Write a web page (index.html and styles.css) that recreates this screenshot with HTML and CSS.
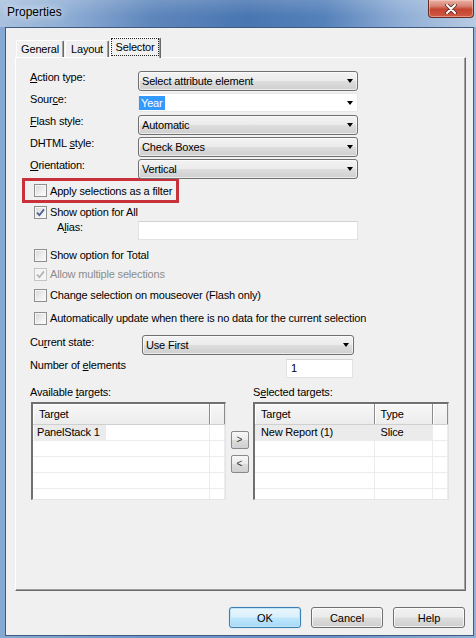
FILE: index.html
```html
<!DOCTYPE html>
<html lang="en">
<head>
  <meta charset="UTF-8" />
  <meta name="viewport" content="width=device-width, initial-scale=1.0"/>
  <title>Properties</title>
  <link rel="stylesheet" href="styles.css">
</head>
<body>
  <div class="window">
    <div class="titlebar">
      <span class="title">Properties</span>
      <button class="close-btn" title="Close">
        <svg width="12" height="10" viewBox="0 0 12 10">
          <path d="M2 1 L10 9 M10 1 L2 9" stroke="#5a2a24" stroke-width="3.6" stroke-linecap="round"/>
          <path d="M2 1 L10 9 M10 1 L2 9" stroke="#fff" stroke-width="2" stroke-linecap="round"/>
        </svg>
      </button>
    </div>

    <div class="client">
      <div class="tabs">
        <div class="tab tab-general">General</div>
        <div class="tab tab-layout">Layout</div>
        <div class="tab tab-selector active"><span class="focus">Selector</span></div>
      </div>

      <div class="page">
        <div class="fields">
          <label><u>A</u>ction type:</label>
          <div class="combo">Select attribute element</div>

          <label>Sour<u>c</u>e:</label>
          <div class="combo edit"><span class="selected-text">Year</span></div>

          <label><u>F</u>lash style:</label>
          <div class="combo">Automatic</div>

          <label>DHTML <u>s</u>tyle:</label>
          <div class="combo">Check Boxes</div>

          <label><u>O</u>rientation:</label>
          <div class="combo">Vertical</div>
        </div>

        <div class="marked">
          <div class="check-row"><span class="box"></span>Apply selections as a filter</div>
        </div>

        <div class="check-row">
          <span class="box checked">
            <svg width="9" height="9" viewBox="0 0 9 9"><path d="M1 4.6 L3.4 7.2 L8 1.4" fill="none" stroke="#4b5f96" stroke-width="1.8"/></svg>
          </span>Show option for All
        </div>
        <div class="alias-row">
          <label>A<u>l</u>ias:</label>
          <div class="textbox"></div>
        </div>

        <div class="check-row row-total"><span class="box"></span>Show option for Total</div>
        <div class="check-row row-multi disabled">
          <span class="box checked">
            <svg width="9" height="9" viewBox="0 0 9 9"><path d="M1 4.6 L3.4 7.2 L8 1.4" fill="none" stroke="#b4b4b4" stroke-width="1.8"/></svg>
          </span>Allow multiple selections
        </div>
        <div class="check-row row-hover"><span class="box"></span>Change selection on mouseover (Flash only)</div>
        <div class="check-row row-auto"><span class="box"></span>Automatically update when there is no data for the current selection</div>

        <div class="state-row">
          <label>Cu<u>r</u>rent state:</label>
          <div class="combo">Use First</div>
        </div>
        <div class="count-row">
          <label>Number of <u>e</u>lements</label>
          <div class="textbox">1</div>
        </div>

        <div class="targets">
          <label>Available <u>t</u>argets:</label>
          <span></span>
          <label>S<u>e</u>lected targets:</label>

          <div class="list list-available">
            <table>
              <colgroup><col style="width:176px"><col></colgroup>
              <tr><th>Target</th><th></th></tr>
              <tr><td><span class="item">PanelStack 1</span></td><td></td></tr>
              <tr><td></td><td></td></tr>
              <tr><td></td><td></td></tr>
              <tr><td></td><td></td></tr>
              <tr><td></td><td></td></tr>
            </table>
          </div>

          <div class="move-buttons">
            <button class="move">&gt;</button>
            <button class="move">&lt;</button>
          </div>

          <div class="list list-selected">
            <table>
              <colgroup><col style="width:119px"><col style="width:58px"><col></colgroup>
              <tr><th>Target</th><th>Type</th><th></th></tr>
              <tr class="current"><td>New Report (1)</td><td>Slice</td><td class="blank"></td></tr>
              <tr><td></td><td></td><td></td></tr>
              <tr><td></td><td></td><td></td></tr>
              <tr><td></td><td></td><td></td></tr>
              <tr><td></td><td></td><td></td></tr>
            </table>
          </div>
        </div>
      </div>

      <div class="actions">
        <button class="btn default">OK</button>
        <button class="btn">Cancel</button>
        <button class="btn">Help</button>
      </div>
    </div>
  </div>
</body>
</html>
```

FILE: styles.css
```css
* {
  box-sizing: border-box;
}
body {
  margin: 0;
  font-family: "Liberation Sans", Arial, sans-serif;
  font-size: 11px;
  letter-spacing: -0.18px;
  color: #000;
}
u {
  text-decoration-thickness: 1px;
  text-underline-offset: 1px;
}

/* window frame */
.window {
  width: 476px;
  height: 638px;
  display: flex;
  flex-direction: column;
  overflow: hidden;
  background: linear-gradient(90deg, #86a9d4 0%, #6d95c8 30%, #6890c4 70%, #92b1d8 100%);
}
.titlebar {
  height: 27px;
  flex: none;
  display: flex;
  align-items: flex-start;
  background:
    linear-gradient(rgba(255,255,255,0.15), rgba(255,255,255,0) 60%),
    linear-gradient(90deg, #a9c1de 0%, #8eadd4 14%, #5e86bc 32%, #4976b1 52%, #5581ba 68%, #8eadd5 84%, #b7cbe3 100%);
}
.title {
  font-size: 12px;
  line-height: 14px;
  letter-spacing: 0;
  padding: 5px 0 0 7px;
  text-shadow: 0 0 6px #e4eef8, 0 0 10px #dbe7f4;
}
.close-btn {
  margin: 0 2px 0 auto;
  width: 46px;
  height: 18px;
  padding: 0;
  border: 1px solid #6a2b22;
  border-top: none;
  border-radius: 0 0 4px 4px;
  background: linear-gradient(#e9b2a6 0%, #d98476 35%, #c4442f 55%, #cf5a44 100%);
  box-shadow: inset 0 0 0 1px rgba(255,220,210,0.45);
  display: flex;
  align-items: center;
  justify-content: center;
}

.client {
  flex: 1;
  margin: 0 2px 2px 5px;
  border: 1px solid #3f5a7e;
  background: #f0f0f0;
  padding: 9px 7px 0 9px;
}

/* tabs */
.tabs {
  display: flex;
  align-items: flex-end;
  height: 20px;
  padding-left: 1px;
  position: relative;
  z-index: 1;
}
.tab {
  height: 17px;
  border: 1px solid #fff;
  border-right-color: #696969;
  border-bottom: none;
  border-radius: 2px 2px 0 0;
  box-shadow: inset -1px 0 0 #a0a0a0;
  background: #f0f0f0;
  text-align: center;
  line-height: 16px;
}
.tab-general { width: 48px; }
.tab-layout { width: 44px; margin-left: 1px; }
.tab-selector { width: 51px; margin-left: 1px; }
.tab.active {
  height: 21px;
  margin-bottom: -1px;
  padding: 0 1px 0 0;
}
.focus {
  display: block;
  height: 18px;
  border: 1px dotted #222;
  line-height: 16px;
}

/* tab page */
.page {
  width: 451px;
  height: 534px;
  border: 1px solid #fff;
  border-right-color: #696969;
  border-bottom-color: #696969;
  box-shadow: inset -1px -1px 0 #a0a0a0;
  padding: 13px 0 0 14px;
}
.fields {
  display: grid;
  grid-template-columns: 108px 220px;
  grid-auto-rows: 20px;
  row-gap: 2px;
}
label {
  line-height: 13px;
}

.combo {
  display: flex;
  align-items: center;
  justify-content: space-between;
  border: 1px solid #707070;
  border-radius: 3px;
  padding: 0 4px 0 3px;
  white-space: nowrap;
  background: linear-gradient(#f3f3f3 0%, #ebebeb 48%, #dddddd 52%, #cfcfcf 100%);
  box-shadow: inset 0 0 0 1px rgba(255,255,255,0.6);
}
.combo::after {
  content: "";
  border-left: 3.5px solid transparent;
  border-right: 3.5px solid transparent;
  border-top: 4px solid #000;
}
.combo.edit {
  background: #fff;
  border-color: #e8e8e8;
  border-radius: 0;
  box-shadow: none;
  padding-left: 0;
  height: 19px;
}
.selected-text {
  background: #3399ff;
  color: #fff;
  padding: 0 2px;
  line-height: 14px;
}

.marked {
  width: 157px;
  height: 25px;
  margin: -1px 0 0 -8px;
  border: 3px solid #c8303a;
  display: flex;
  align-items: center;
  padding-left: 9px;
}
.marked .check-row {
  padding-left: 0;
}

.check-row {
  display: flex;
  align-items: center;
  height: 18px;
  padding-left: 4px;
  white-space: nowrap;
}
.box {
  width: 13px;
  height: 13px;
  flex: none;
  margin-right: 3px;
  border: 1px solid #8e8f8f;
  background: linear-gradient(135deg, #d6d6d6 0%, #f0f0f0 60%, #fbfbfb 100%);
  box-shadow: inset 0 0 0 1px #f6f6f6;
  display: flex;
  align-items: center;
  justify-content: center;
}
.disabled {
  color: #8d8d8d;
}
.disabled .box {
  border-color: #c4c4c4;
  background: #f4f4f4;
}

.alias-row {
  display: grid;
  grid-template-columns: 81px 220px;
  height: 19px;
  padding-left: 27px;
}
.textbox {
  background: #fff;
  border: 1px solid #e2e2e2;
  border-top-color: #d4d4d4;
  padding-left: 4px;
  line-height: 17px;
}
.row-total { margin-top: 6px; }
.row-multi { margin-top: 1px; }
.row-hover { margin-top: 3px; }
.row-auto { margin-top: 5px; }

.state-row {
  display: grid;
  grid-template-columns: 112px 212px;
  height: 20px;
  margin-top: 8px;
}
.state-row label {
  padding-top: 1px;
}
.count-row {
  display: grid;
  grid-template-columns: 256px 67px;
  height: 19px;
  margin-top: 4px;
}

/* target lists */
.targets {
  display: grid;
  grid-template-columns: 196px 27px 196px;
  grid-template-rows: 13px 98px;
  row-gap: 3px;
  margin-top: 8px;
}
.list {
  background: #fff;
  border-top: 2px solid #707070;
  border-left: 2px solid #707070;
  border-right: 1px solid #e4e4e4;
  border-bottom: 1px solid #e4e4e4;
  overflow: hidden;
}
.list-available {
  margin-left: 1px;
}
.list table {
  width: 100%;
  border-collapse: collapse;
  table-layout: fixed;
}
.list th {
  height: 20px;
  padding: 0 0 0 6px;
  text-align: left;
  font-weight: normal;
  background: linear-gradient(#f7f7f7, #ececec);
  border-right: 1px solid #8c8c8c;
  border-bottom: 1px solid #cfcfcf;
  box-shadow: inset 1px 1px 0 #fff;
}
.list td {
  height: 16px;
  padding: 0 0 0 6px;
  border-right: 1px solid #ececec;
  border-bottom: 1px solid #ececec;
  white-space: nowrap;
}
.list-available td:first-child {
  padding-left: 1px;
}
.item {
  display: inline-block;
  height: 15px;
  line-height: 15px;
  padding: 0 6px 0 3px;
  background: #ebebeb;
}
.current td {
  background: #ebebeb;
}
.current td.blank {
  background: #fff;
}

.move-buttons {
  display: flex;
  flex-direction: column;
  align-items: center;
  gap: 6px;
  padding-top: 29px;
}
.move {
  width: 18px;
  height: 18px;
  padding: 0;
  border: 1px solid #8a8a8a;
  border-radius: 2px;
  background: linear-gradient(#f6f6f6 0%, #ebebeb 48%, #dcdcdc 52%, #d0d0d0 100%);
  font-family: "Liberation Sans", Arial, sans-serif;
  font-size: 10px;
  color: #333;
  line-height: 14px;
}

/* dialog buttons */
.actions {
  display: flex;
  justify-content: flex-end;
  gap: 10px;
  margin-top: 16px;
  padding-right: 1px;
}
.btn {
  width: 72px;
  height: 21px;
  padding: 0;
  border: 1px solid #707070;
  border-radius: 3px;
  background: linear-gradient(#f2f2f2 0%, #ebebeb 48%, #dddddd 52%, #cfcfcf 100%);
  box-shadow: inset 0 0 0 1px rgba(255,255,255,0.7);
  font-family: "Liberation Sans", Arial, sans-serif;
  font-size: 11px;
  color: #000;
}
.btn.default {
  border-color: #3c7fb1;
  background: linear-gradient(#eaf6fd 0%, #d9f0fc 48%, #bee6fd 52%, #a7d9f5 100%);
  box-shadow: inset 0 0 0 1px #bfe3f7, 0 0 1px #6fb0dc;
}
```
